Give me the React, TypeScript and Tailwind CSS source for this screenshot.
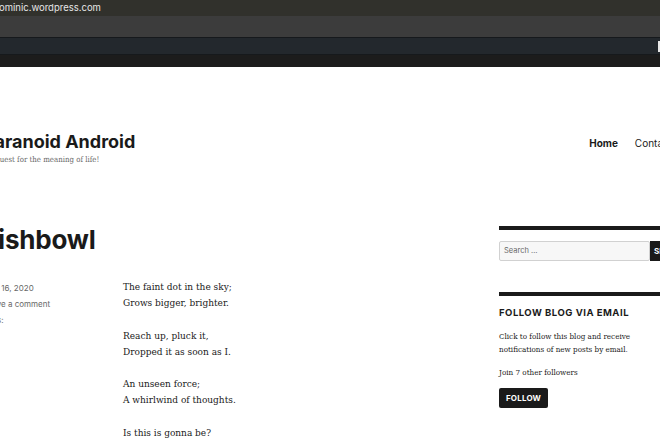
import React from 'react';

const sans = "font-['Inter','Liberation_Sans',sans-serif]";
const serif = "font-['DejaVu_Serif_Condensed','DejaVu_Serif','Liberation_Serif',serif] font-stretch-condensed";

const stanzas = [
  ['The faint dot in the sky;', 'Grows bigger, brighter.'],
  ['Reach up, pluck it,', 'Dropped it as soon as I.'],
  ['An unseen force;', 'A whirlwind of thoughts.'],
  ['Is this is gonna be?'],
];

export default function App() {
  return (
    <div className="w-[660px] h-[440px] overflow-hidden bg-white flex flex-col">
      {/* Browser chrome */}
      <div className="h-[16px] bg-[#31312c] flex items-center shrink-0">
        <span className={`${sans} text-[9.5px] text-[#e6e6e6] -ml-px leading-none`}>ominic.wordpress.com</span>
      </div>
      <div className="h-[21px] bg-[#3c3c3c] shrink-0" />
      <div className="h-[18px] bg-[#23282d] border-y border-[#16191c] flex justify-end items-center shrink-0">
        <div className="w-[2px] h-[11px] bg-[#e8e8e8]" />
      </div>
      <div className="h-[12px] bg-[#1c1c1c] shrink-0" />

      {/* Page */}
      <div className="flex-1 relative -ml-[17px]">
        {/* Site header */}
        <div className="flex justify-between items-start pt-[63px]">
          <div>
            <div className={`${sans} text-[18px] font-bold text-[#1a1a1a] leading-[24px]`}>Paranoid Android</div>
            <div className={`${serif} text-[7.8px] text-[#686868] leading-[12px] ml-[5px]`}>A quest for the meaning of life!</div>
          </div>
          <nav className={`${sans} flex gap-[17px] text-[10px] mt-[6px] -mr-[12px]`}>
            <span className="font-bold text-[#1a1a1a]">Home</span>
            <span className="text-[#1a1a1a]">Contact</span>
          </nav>
        </div>

        {/* Main row */}
        <div className="flex mt-[50px]">
          <div className="w-[516px] shrink-0 pt-[8px]">
            <h1 className={`${sans} text-[26px] font-bold text-[#1a1a1a] leading-[32px] tracking-[-0.2px]`}>Fishbowl</h1>
            <div className="flex mt-[23px]">
              <div className={`${sans} w-[140px] shrink-0 text-[8px] text-[#686868] leading-[16px] pt-[1px]`}>
                <div>May 16, 2020</div>
                <div>Leave a comment</div>
                <div>Tags:</div>
              </div>
              <div className={`${serif} text-[10px] text-[#1a1a1a] leading-[16px]`}>
                {stanzas.map((s, i) => (
                  <p key={i} className="mb-[16.5px]">
                    {s.map((l, j) => (
                      <span key={j} className="block">{l}</span>
                    ))}
                  </p>
                ))}
              </div>
            </div>
          </div>

          {/* Sidebar */}
          <aside className="w-[200px] shrink-0 pt-[10px]">
            <div className="border-t-[4px] border-[#1a1a1a] pt-[11px]">
              <div className="flex h-[20px]">
                <div className={`${sans} w-[151px] bg-[#f7f7f7] border border-[#d1d1d1] rounded-[2px] text-[7.5px] text-[#686868] flex items-center pl-[4px]`}>Search …</div>
                <div className={`${sans} bg-[#1a1a1a] text-white text-[8px] font-bold flex items-center px-[4px]`}>SEARCH</div>
              </div>
            </div>
            <div className="border-t-[4px] border-[#1a1a1a] mt-[31px] pt-[11px]">
              <h2 className={`${sans} text-[9.5px] font-bold text-[#1a1a1a] tracking-[0.5px] leading-[12px]`}>FOLLOW BLOG VIA EMAIL</h2>
              <p className={`${serif} text-[8px] text-[#1a1a1a] leading-[12.5px] mt-[12px] w-[150px]`}>
                Click to follow this blog and receive notifications of new posts by email.
              </p>
              <p className={`${serif} text-[8px] text-[#1a1a1a] leading-[12.5px] mt-[11px]`}>Join 7 other followers</p>
              <button className={`${sans} mt-[8px] h-[20px] w-[49px] bg-[#1a1a1a] text-white text-[8px] font-bold rounded-[2px] tracking-[0.2px]`}>FOLLOW</button>
            </div>
          </aside>
        </div>
      </div>

      <div className="h-[3px] bg-[#ebebeb] shrink-0" />
    </div>
  );
}
